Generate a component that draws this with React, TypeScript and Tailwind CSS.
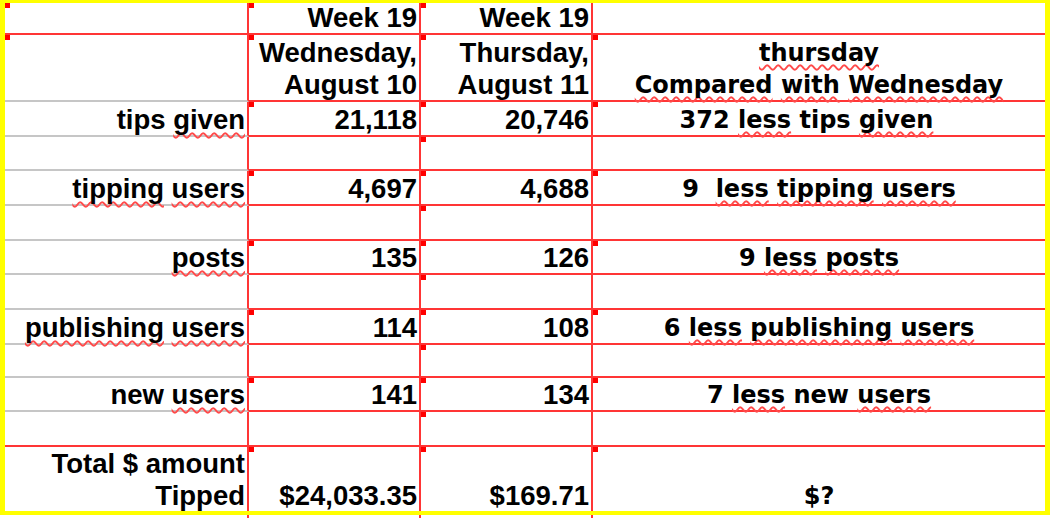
import type { ReactNode } from 'react'

function W({ children }: { children: ReactNode }) {
  return (
    <span className="underline decoration-wavy decoration-[#ff4a4a] decoration-[1.6px] underline-offset-[3px] [text-decoration-skip-ink:none]">
      {children}
    </span>
  )
}

type Row = {
  cells: ReactNode[]
  redLeft?: boolean
  last?: boolean
  marks: boolean[]
}

const ROWS: Row[] = [
  { cells: ['', 'Week 19', 'Week 19', ''], redLeft: true, marks: [true, true, true, false] },
  {
    cells: [
      '',
      <>Wednesday,<br />August 10</>,
      <>Thursday,<br />August 11</>,
      <>
        <W>thursday</W>
        <br />
        <W>Compared</W> <W>with</W> <W>Wednesday</W>
      </>,
    ],
    marks: [true, true, true, true],
  },
  {
    cells: [<>tips <W>given</W></>, '21,118', '20,746', <>372 <W>less</W> tips <W>given</W>{'   '}</>],
    marks: [false, true, true, true],
  },
  { cells: ['', '', '', ''], marks: [false, false, true, false] },
  {
    cells: [
      <><W>tipping</W> <W>users</W></>,
      '4,697',
      '4,688',
      <>9  <W>less</W> <W>tipping</W> <W>users</W></>,
    ],
    marks: [false, true, true, true],
  },
  { cells: ['', '', '', ''], marks: [false, false, true, false] },
  {
    cells: [<W>posts</W>, '135', '126', <>9 <W>less</W> <W>posts</W></>],
    marks: [false, true, true, true],
  },
  { cells: ['', '', '', ''], marks: [false, false, true, false] },
  {
    cells: [
      <><W>publishing</W> <W>users</W></>,
      '114',
      '108',
      <>6 <W>less</W> <W>publishing</W> <W>users</W></>,
    ],
    marks: [false, true, true, true],
  },
  { cells: ['', '', '', ''], marks: [false, false, true, false] },
  {
    cells: [<>new <W>users</W></>, '141', '134', <>7 <W>less</W> new <W>users</W></>],
    marks: [false, true, true, true],
  },
  { cells: ['', '', '', ''], redLeft: true, marks: [false, false, true, false] },
  {
    cells: [<>Total $ amount<br />Tipped</>, '$24,033.35', '$169.71', '$?'],
    last: true,
    marks: [false, true, true, true],
  },
]

function Cell({ row, col }: { row: Row; col: number }) {
  const bottom = row.last
    ? ''
    : col === 0 && !row.redLeft
      ? 'border-b-2 border-b-[#c6c6c6]'
      : 'border-b-2 border-b-[#ff3535]'
  const right = col < 3 ? 'border-r-2 border-r-[#ff3535]' : ''
  const text =
    col === 3
      ? "justify-center text-center font-['DejaVu_Sans',sans-serif] text-[24px]"
      : "justify-end text-right pr-[2px] font-['Liberation_Sans',Arial,sans-serif] text-[27.5px]"

  return (
    <div className={`relative flex items-end overflow-visible whitespace-pre font-bold leading-[32px] text-black ${bottom} ${right} ${text}`}>
      {row.marks[col] && <span className="absolute left-0 top-0 h-[5px] w-[5px] bg-[#ff0000]" />}
      <div className="mb-[-1px]">{row.cells[col]}</div>
    </div>
  )
}

export default function App() {
  return (
    <div className="h-[518px] w-[1050px] overflow-hidden bg-white">
      <div className="h-[515px] border-t-[3px] border-r-[5px] border-b-[4px] border-l-[5px] border-[#ffff00]">
        <div className="grid h-[508px] grid-cols-[244px_172px_172px_452px] grid-rows-[32px_67px_35px_34px_35px_35px_34px_35px_35px_33px_34px_35px_64px]">
          {ROWS.map((row, r) => [0, 1, 2, 3].map((c) => <Cell key={`${r}-${c}`} row={row} col={c} />))}
        </div>
      </div>
      <div className="flex h-[3px]">
        <div className="w-[247px]" />
        <div className="w-[2px] bg-[#ff3535]" />
        <div className="w-[170px]" />
        <div className="w-[2px] bg-[#ff3535]" />
        <div className="w-[170px]" />
        <div className="w-[2px] bg-[#ff3535]" />
      </div>
    </div>
  )
}
